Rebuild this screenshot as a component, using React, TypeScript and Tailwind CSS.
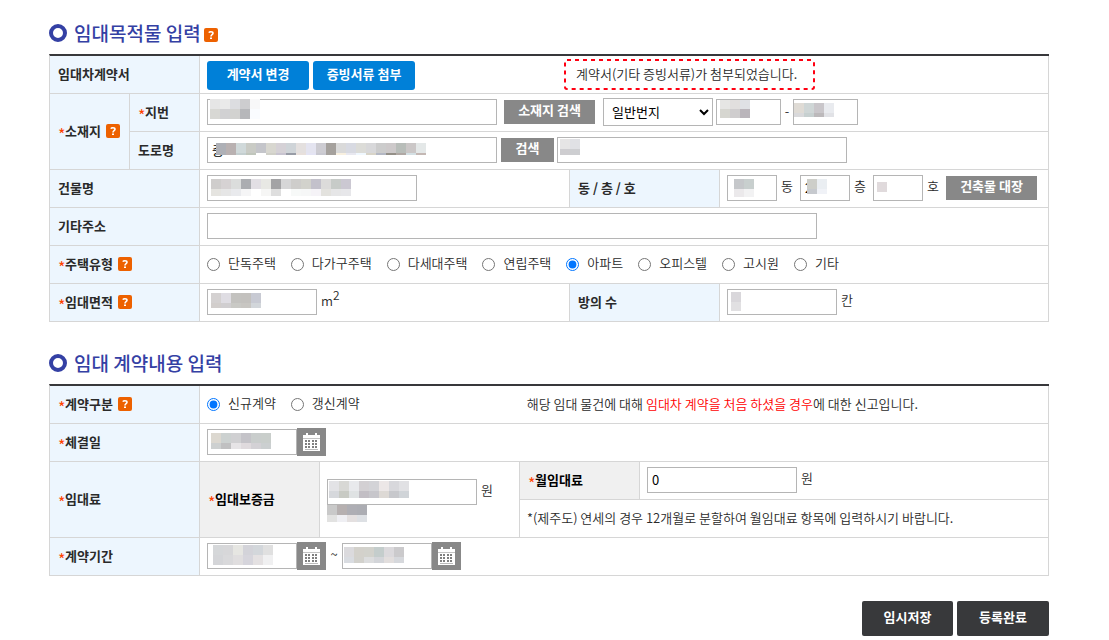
import { useState, type ReactNode } from "react"
import { clsx } from "clsx"

const houseTypes = ["단독주택", "다가구주택", "다세대주택", "연립주택", "아파트", "오피스텔", "고시원", "기타"]
const contractTypes = ["신규계약", "갱신계약"]

type MosaicRow = { h: number; colors: string }

// masked values: each row is a strip of 10px blocks
const masks: Record<string, MosaicRow[]> = {
  lot: [
    { h: 10, colors: "e6e6e6 eaeaea dcdde0 cdcdcf f8f8f9" },
    { h: 10, colors: "d8d8d4 d1d1d3 d2d2d0 b6b7ba fafcff" },
  ],
  lotMain: [
    { h: 9, colors: "e6e6e4 e1dfde dfe1e5" },
    { h: 9, colors: "d6d6d0 cfcdce bab5bb" },
  ],
  lotSub: [
    { h: 10, colors: "dfdbd5 cfd6d6 c9c6ca e9ebef" },
    { h: 4, colors: "d9d9db c7d0d0 bcb9bb e1e2e6" },
  ],
  road: [
    { h: 10, colors: "aeb0b6 b9b1b1 d0d9da c9cbc5 c4c5ca d8d7d0 d5d1d6 cfd4d8 e4e0df e4e4f0 cdccd2 a5a19d dadada d8dae2 dcdcd8 d8d8da cccccc cdc9ca b8bdb9 cbc7c7 e4e8e8" },
    { h: 2, colors: "aeb0b6 b9b1b1 c4cfd0 c0c6bc ffffff d0d0c8 c8c4d0 989ca6 e8e0dc e4e4f4 c8c8d0 a5a19d f8f0e0 e8e8f0 f0f8ff d8d4c8 b4b8c4 949088 b0a8a4 d4e0e4 c4b8b4" },
  ],
  roadDetail: [
    { h: 10, colors: "e6e5e5 e0e1e5" },
    { h: 6, colors: "cecdd0 cdced1" },
  ],
  building: [
    { h: 10, colors: "cfcdcc d6d2d3 dbdddc abadb1 e2dfe4 e8e8e4 a3a3a5 d6d6d7 cecdcb d2d2cc c3c1cb dcdbda c7cbc8 cbc8d2" },
    { h: 7, colors: "e5e4e0 e6e6e6 e9eaed f5f5f6 ffffff f6f6f5 dedede ffffff f7f9f8 f6f7f7 f5f3f7 e3e2de e6e6e7 e7e7ea" },
  ],
  dong: [
    { h: 10, colors: "c5c7ca c8cfce" },
    { h: 8, colors: "ebe9eb f2f2f3" },
  ],
  floor: [
    { h: 10, colors: "cdcec9 eaeef2" },
    { h: 5, colors: "c6c9ce f0f2f7" },
  ],
  room: [{ h: 10, colors: "e0dadc" }],
  area: [
    { h: 10, colors: "d4d1d1 dfdde3 c3c2bf c3c1be c8cad3" },
    { h: 5, colors: "d2cecc d0ced0 c9c9c5 c8c6c2 d2d6da" },
  ],
  rooms: [
    { h: 10, colors: "d9d7db" },
    { h: 9, colors: "e1e0e2" },
  ],
  signed: [
    { h: 10, colors: "dcd8d0 ccd1d0 d0d0d2 c4c3c8 c9cdcc c9cecb" },
    { h: 6, colors: "cdd0d0 c0c0c1 e6e4e6 dfdadd d3d1d5 cbcfd0" },
  ],
  deposit: [
    { h: 10, colors: "e3e3e6 d8d8d5 e8e9ec d3d0d3 d3d3d7 ece7e7 d8d8dc e1e1e4" },
    { h: 7, colors: "d6d8dc c8cac4 dfe2e3 c2bec4 c7c6cb ddd9d5 c7c8cc d0d4d8" },
  ],
  depositText: [
    { h: 10, colors: "c9c9c9 b6b0b0 aeaeb4 acadb3" },
    { h: 7, colors: "e2e2e1 efeff3 e4e0e0 dde0e4" },
  ],
  start: [
    { h: 10, colors: "d5d7d9 d7d7d9 e6e6e2 d3d3d9 d3d7db e0e0e0" },
    { h: 10, colors: "d4d5d8 d9d9db e0dedf d6d5dc e4e1e2 f0f0f1" },
  ],
  end: [
    { h: 10, colors: "dbdadd d3d1cb d2d2cc c4cdcc dbd9dc cbcacc" },
    { h: 6, colors: "d9dce1 d2d1cc dcddde d3d5d9 e2dedd d6d8dc" },
  ],
}

function Mosaic({ name, className }: { name: string; className?: string }) {
  const rows = masks[name]
  const width = rows[0].colors.split(" ").length * 10
  const height = rows.reduce((sum, r) => sum + r.h, 0)

  return (
    <svg width={width} height={height} className={clsx("pointer-events-none block", className)} shapeRendering="crispEdges" aria-hidden="true">
      {rows.map((row, i) =>
        row.colors.split(" ").map((color, j) => (
          <rect key={`${i}-${j}`} x={j * 10} y={i === 0 ? 0 : rows[0].h} width={10} height={row.h} fill={`#${color}`} />
        ))
      )}
    </svg>
  )
}

type FieldProps = { label: string; width: string; value?: string; mask?: string; maskAt?: string }

function Field({ label, width, value, mask, maskAt = "left-1 top-1" }: FieldProps) {
  return (
    <span className={clsx("relative block shrink-0", width)}>
      <input
        type="text"
        aria-label={label}
        defaultValue={value}
        className="block h-[26px] w-full border border-[#b5b5b5] bg-white px-1 pb-0.5 text-[13px] font-normal text-black outline-none focus:border-[#0080d8]"
      />
      {mask && <Mosaic name={mask} className={clsx("absolute", maskAt)} />}
    </span>
  )
}

function Help() {
  return (
    <button type="button" aria-label="도움말" className="block size-[14px] shrink-0 rounded-[2px] bg-[#ed6100]">
      <svg viewBox="0 0 14 14" className="block size-[14px]" fill="none" stroke="#fff" strokeWidth="1.6">
        <path d="M4.8 4.7C5.3 3.9 6.100 3.7 6.900 3.7c1.300 0 2.100.6 2.100 1.600C9 6.700 7 6.700 7 8.500" />
        <path d="M6 10.200h2" />
      </svg>
    </button>
  )
}

function GrayButton({ children, width }: { children: ReactNode; width: string }) {
  return (
    <button type="button" className={clsx("h-6 shrink-0 bg-[#888] pb-1 text-[13px] leading-5 font-bold text-white", width)}>
      {children}
    </button>
  )
}

function DateField({ label, mask, maskAt }: { label: string; mask: string; maskAt?: string }) {
  return (
    <span className="flex items-center">
      <Field label={label} width="w-[90px]" mask={mask} maskAt={maskAt} />
      <button type="button" aria-label={`${label} 달력`} className="flex h-7 w-[29px] items-center justify-center bg-[#888]">
        <svg width="17" height="18" viewBox="0 0 17 18" shapeRendering="crispEdges" aria-hidden="true">
          <path fill="#fff" d="M0 2h3V0h2v2h7V0h2v2h3v3H0z" />
          <path fill="#c4c4c4" d="M0 5h17v1H0z" />
          <path fill="#fff" d="M0 6h17v12H0z" />
          {[7, 10, 13].map((y) => [2, 5, 9, 12].map((x) => <path key={`${x}-${y}`} fill="#808080" d={`M${x} ${y}h2v2h-2z`} />))}
          <path fill="#bbb" d="M2 16h13v1H2z" />
        </svg>
      </button>
    </span>
  )
}

function SectionTitle({ children, help }: { children: ReactNode; help?: boolean }) {
  return (
    <h2 className="mb-3 flex h-[18px] items-center text-[19px] leading-[18px] font-medium text-[#3440a4]">
      <span className="mr-[7px] size-[18px] rounded-full border-4 border-[#3440a4]" />
      {children}
      {help && <span className="ml-[3px] pt-[3px]"><Help /></span>}
    </h2>
  )
}

type HeadProps = { children: ReactNode; required?: boolean; help?: boolean; gray?: boolean; colSpan?: number; rowSpan?: number }

function Head({ children, required, help, gray, colSpan, rowSpan }: HeadProps) {
  return (
    <th
      colSpan={colSpan}
      rowSpan={rowSpan}
      className={clsx("h-[38px] border-r border-b border-[#d6d6d6] px-2 pb-px text-left font-bold", gray ? "bg-[#f0f0f0] text-black" : "bg-[#edf6fe]")}
    >
      <span className="flex items-center whitespace-nowrap">
        {required && <span className="w-[7px] pt-[6px] text-base leading-5 font-normal text-[#ff4200]">*</span>}
        {children}
        {help && <span className="ml-[5px]"><Help /></span>}
      </span>
    </th>
  )
}

function Cell({ children, colSpan, rowSpan }: { children: ReactNode; colSpan?: number; rowSpan?: number }) {
  return (
    <td colSpan={colSpan} rowSpan={rowSpan} className="h-[38px] border-r border-b border-[#d6d6d6] pb-px pl-[7px] whitespace-nowrap">
      {children}
    </td>
  )
}

type RadiosProps = { name: string; items: string[]; value: string; onChange: (v: string) => void }

function Radios({ name, items, value, onChange }: RadiosProps) {
  return (
    <div className="flex items-center gap-[15px]">
      {items.map((item) => (
        <label key={item} className="flex items-center gap-2">
          <input type="radio" name={name} checked={value === item} onChange={() => onChange(item)} className="size-[13px]" />
          <span className="pb-0.5">{item}</span>
        </label>
      ))}
    </div>
  )
}

export default function App() {
  const [houseType, setHouseType] = useState<string>("아파트")
  const [contractType, setContractType] = useState<string>("신규계약")

  return (
    <form
      onSubmit={(e) => e.preventDefault()}
      className="bg-white pt-6 pr-[60px] pb-1 pl-[49px] font-['Noto_Sans_CJK_KR',sans-serif] text-[13px] leading-5 font-[350] text-[#2a2a2a]"
    >
      <SectionTitle help>임대목적물 입력</SectionTitle>

      <table className="w-full table-fixed border-separate border-spacing-0 border-t-2 border-l border-t-[#38383b] border-l-[#d6d6d6]">
        <colgroup>
          <col className="w-[80px]" />
          <col className="w-[70px]" />
          <col className="w-[370px]" />
          <col className="w-[150px]" />
          <col />
        </colgroup>
        <tbody>
          <tr>
            <Head colSpan={2}>임대차계약서</Head>
            <Cell colSpan={3}>
              <div className="flex items-end">
                <button type="button" className="mr-1 h-[29px] w-[102px] rounded-[3px] bg-[#0080d8] pb-0.5 font-bold text-white">계약서 변경</button>
                <button type="button" className="h-[29px] w-[102px] rounded-[3px] bg-[#0080d8] pb-0.5 font-bold text-white">증빙서류 첨부</button>
                <p className="relative ml-[149px] flex h-[31px] w-[251px] items-center pl-3">
                  <svg className="absolute inset-0 size-full" viewBox="0 0 251 31" fill="none" aria-hidden="true">
                    <rect x="1" y="1" width="249" height="29" rx="2" stroke="#ff0012" strokeWidth="2" strokeDasharray="4 4" />
                  </svg>
                  계약서(기타 증빙서류)가 첨부되었습니다.
                </p>
              </div>
            </Cell>
          </tr>
          <tr>
            <Head rowSpan={2} required help>소재지</Head>
            <Head required>지번</Head>
            <Cell colSpan={3}>
              <div className="flex items-center">
                <Field label="지번" width="w-[290px]" mask="lot" maskAt="left-[3px] top-0" />
                <span className="mr-2 ml-[7px] flex"><GrayButton width="w-[91px]">소재지 검색</GrayButton></span>
                <select aria-label="번지 구분" className="mr-[3px] h-7 w-[110px] border border-[#b5b5b5] bg-white px-1 pb-0.5 text-[13px] font-normal text-black">
                  <option>일반번지</option>
                  <option>산</option>
                </select>
                <Field label="본번" width="w-[65px]" mask="lotMain" maskAt="left-1 top-px" />
                <span className="w-3 pb-0.5 text-center">-</span>
                <Field label="부번" width="w-[65px]" mask="lotSub" maskAt="left-px top-1" />
              </div>
            </Cell>
          </tr>
          <tr>
            <Head>도로명</Head>
            <Cell colSpan={3}>
              <div className="flex items-center">
                <Field label="도로명" width="w-[290px]" value="충" mask="road" maskAt="left-[9px] top-[6px]" />
                <span className="mr-[3px] ml-1 flex"><GrayButton width="w-[53px]">검색</GrayButton></span>
                <Field label="도로명 상세" width="w-[290px]" mask="roadDetail" maskAt="left-[3px] top-[2px]" />
              </div>
            </Cell>
          </tr>
          <tr>
            <Head colSpan={2}>건물명</Head>
            <Cell>
              <Field label="건물명" width="w-[210px]" mask="building" />
            </Cell>
            <Head>동 / 층 / 호</Head>
            <Cell>
              <div className="flex items-center">
                <Field label="동" width="w-[50px]" mask="dong" maskAt="left-[7px] top-1" />
                <span className="w-[23px] pb-1 pl-1">동</span>
                <Field label="층" width="w-[50px]" value="2" mask="floor" maskAt="left-[7px] top-1" />
                <span className="w-[23px] pb-1 pl-1">층</span>
                <Field label="호" width="w-[50px]" mask="room" maskAt="left-1 top-[7px]" />
                <span className="w-[23px] pb-1 pl-1">호</span>
                <GrayButton width="w-[91px]">건축물 대장</GrayButton>
              </div>
            </Cell>
          </tr>
          <tr>
            <Head colSpan={2}>기타주소</Head>
            <Cell colSpan={3}>
              <Field label="기타주소" width="w-[610px]" />
            </Cell>
          </tr>
          <tr>
            <Head colSpan={2} required help>주택유형</Head>
            <Cell colSpan={3}>
              <Radios name="houseType" items={houseTypes} value={houseType} onChange={setHouseType} />
            </Cell>
          </tr>
          <tr>
            <Head colSpan={2} required help>임대면적</Head>
            <Cell>
              <div className="flex items-center gap-1">
                <Field label="임대면적" width="w-[110px]" mask="area" />
                <span className="pb-0.5">m<sup className="text-xs">2</sup></span>
              </div>
            </Cell>
            <Head>방의 수</Head>
            <Cell>
              <div className="flex items-center gap-1">
                <Field label="방의 수" width="w-[110px]" mask="rooms" maskAt="left-1 top-[3px]" />
                <span className="pb-1">칸</span>
              </div>
            </Cell>
          </tr>
        </tbody>
      </table>

      <div className="mt-8">
        <SectionTitle>임대 계약내용 입력</SectionTitle>
      </div>

      <table className="w-full table-fixed border-separate border-spacing-0 border-t-2 border-l border-t-[#38383b] border-l-[#d6d6d6]">
        <colgroup>
          <col className="w-[150px]" />
          <col className="w-[120px]" />
          <col className="w-[200px]" />
          <col className="w-[120px]" />
          <col />
        </colgroup>
        <tbody>
          <tr>
            <Head required help>계약구분</Head>
            <Cell colSpan={4}>
              <div className="flex items-center">
                <Radios name="contractType" items={contractTypes} value={contractType} onChange={setContractType} />
                <p className="ml-[167px]">
                  해당 임대 물건에 대해 <span className="text-[#ff0000]">임대차 계약을 처음 하셨을 경우</span>에 대한 신고입니다.
                </p>
              </div>
            </Cell>
          </tr>
          <tr>
            <Head required>체결일</Head>
            <Cell colSpan={4}>
              <DateField label="체결일" mask="signed" />
            </Cell>
          </tr>
          <tr>
            <Head rowSpan={2} required>임대료</Head>
            <Head rowSpan={2} required gray>임대보증금</Head>
            <Cell rowSpan={2}>
              <div className="flex items-center gap-1 pt-[3px]">
                <Field label="임대보증금" width="w-[150px]" mask="deposit" maskAt="left-[2px] top-[2px]" />
                <span className="pb-1">원</span>
              </div>
              <Mosaic name="depositText" />
            </Cell>
            <Head required gray>월임대료</Head>
            <Cell>
              <div className="flex items-center gap-1">
                <Field label="월임대료" width="w-[150px]" value="0" />
                <span className="pb-1">원</span>
              </div>
            </Cell>
          </tr>
          <tr>
            <Cell colSpan={2}>*(제주도) 연세의 경우 12개월로 분할하여 월임대료 항목에 입력하시기 바랍니다.</Cell>
          </tr>
          <tr>
            <Head required>계약기간</Head>
            <Cell colSpan={4}>
              <div className="flex items-center">
                <DateField label="계약 시작일" mask="start" maskAt="left-[6px] top-[2px]" />
                <span className="w-4 pb-1 text-center">~</span>
                <DateField label="계약 종료일" mask="end" maskAt="left-[2px] top-1" />
              </div>
            </Cell>
          </tr>
        </tbody>
      </table>

      <div className="mt-[25px] flex justify-end gap-1">
        <button type="button" className="h-[35px] w-[91px] rounded-[2px] bg-[#38393b] pb-1 font-bold text-white">임시저장</button>
        <button type="submit" className="h-[35px] w-[92px] rounded-[2px] bg-[#38393b] pb-1 font-bold text-white">등록완료</button>
      </div>
    </form>
  )
}
